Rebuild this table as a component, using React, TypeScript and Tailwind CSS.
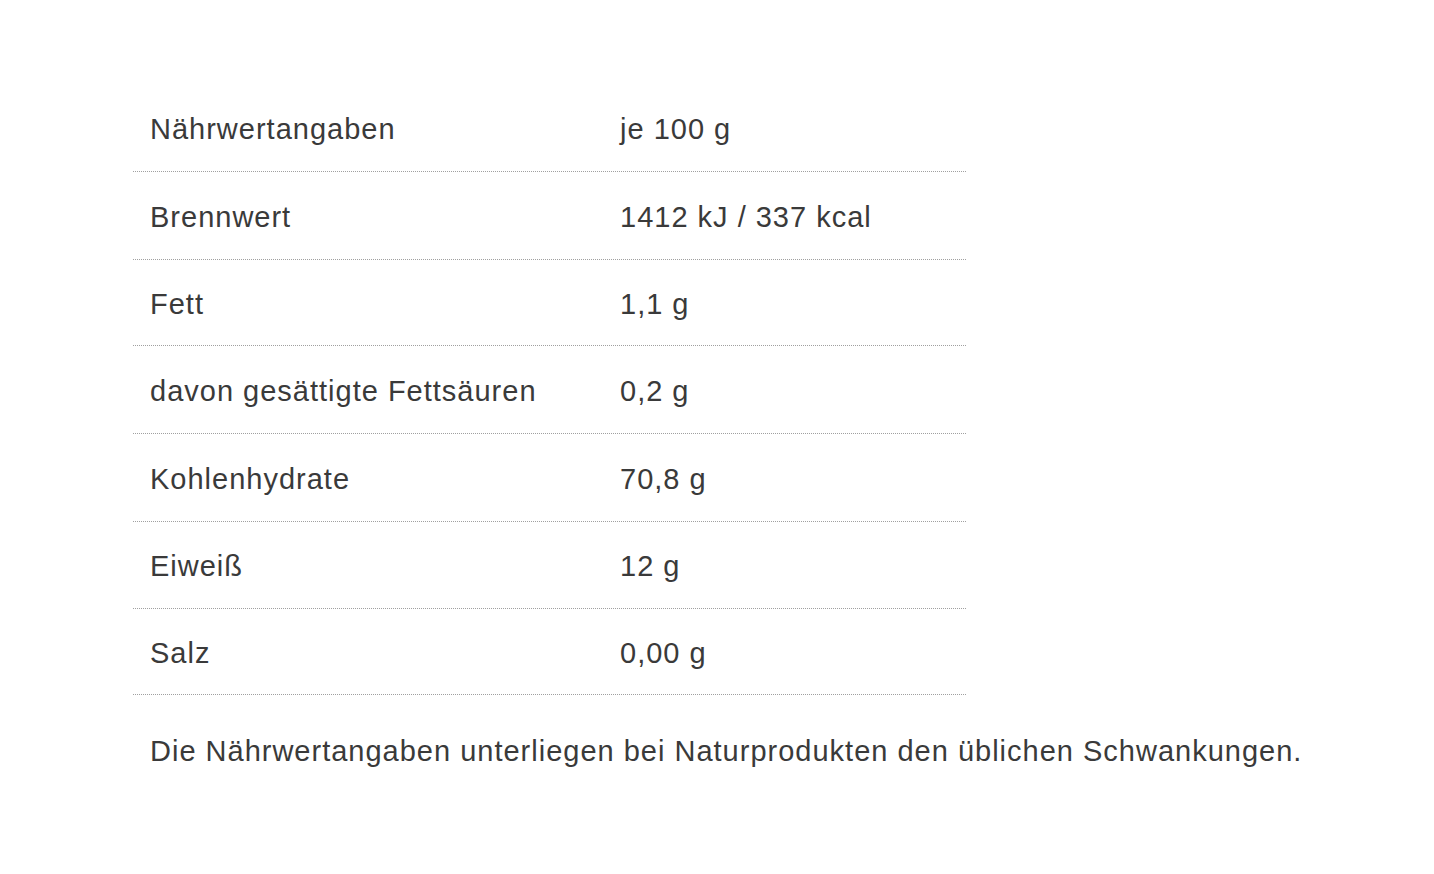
import React from "react";

const rows: [string, string][] = [
  ["Nährwertangaben", "je 100 g"],
  ["Brennwert", "1412 kJ / 337 kcal"],
  ["Fett", "1,1 g"],
  ["davon gesättigte Fettsäuren", "0,2 g"],
  ["Kohlenhydrate", "70,8 g"],
  ["Eiweiß", "12 g"],
  ["Salz", "0,00 g"],
];

const heights = ["h-[88px]", "h-[88px]", "h-[86px]", "h-[88px]", "h-[88px]", "h-[87px]", "h-[86px]"];

export default function App() {
  return (
    <div
      className="min-h-[874px] w-full bg-white pt-[84px] pl-[133px] text-[29px] tracking-[1px] text-[#3a3a3a]"
      style={{ fontFamily: '"Liberation Sans", Arial, sans-serif' }}
    >
      <div className="w-[833px]">
        {rows.map(([a, b], i) => (
          <div
            key={i}
            className={`flex ${heights[i]} items-center border-b border-dotted border-[#a0a0a0] pt-[4px]`}
          >
            <div className="w-[487px] shrink-0 pl-[17px]">{a}</div>
            <div className="whitespace-nowrap">{b}</div>
          </div>
        ))}
      </div>
      <div className="pl-[17px] pt-[35px] whitespace-nowrap">
        Die Nährwertangaben unterliegen bei Naturprodukten den üblichen Schwankungen.
      </div>
    </div>
  );
}
